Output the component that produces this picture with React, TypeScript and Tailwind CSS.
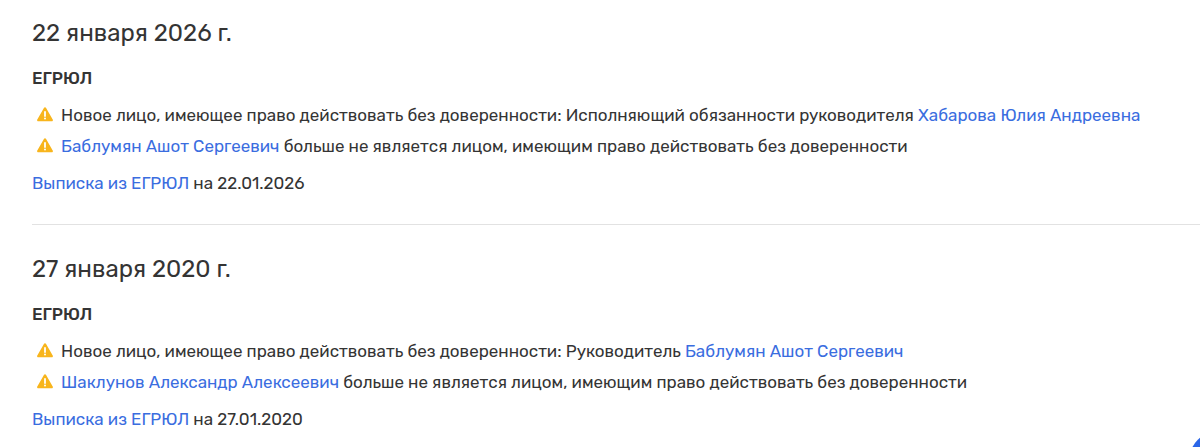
import type { ReactNode } from 'react';

interface Change {
    id: string;
    content: ReactNode;
}

interface HistoryEntry {
    date: string;
    extractDate: string;
    changes: Change[];
}

function TextLink({ children }: { children: ReactNode }) {
    return (
        <a href="#" className="text-[#3a6ddf] hover:underline">
            {children}
        </a>
    );
}

function WarningIcon() {
    return (
        <svg viewBox="0 0 16 16" className="size-4 shrink-0" aria-hidden="true">
            <path
                d="M6.9 0.9a1.3 1.3 0 0 1 2.2 0l6.6 11.5a1.2 1.2 0 0 1-1.1 1.9H1.4a1.2 1.2 0 0 1-1.1-1.9z"
                fill="#f8b51c"
            />
            <path d="M8 4.9v4.1" stroke="#fff" strokeWidth="1.8" strokeLinecap="round" />
            <circle cx="8" cy="11.6" r="1" fill="#fff" />
        </svg>
    );
}

const history: HistoryEntry[] = [
    {
        date: '22 января 2026 г.',
        extractDate: '22.01.2026',
        changes: [
            {
                id: 'new',
                content: (
                    <>
                        Новое лицо, имеющее право действовать без доверенности: Исполняющий обязанности руководителя{' '}
                        <TextLink>Хабарова Юлия Андреевна</TextLink>
                    </>
                )
            },
            {
                id: 'old',
                content: (
                    <>
                        <TextLink>Баблумян Ашот Сергеевич</TextLink> больше не является лицом, имеющим право
                        действовать без доверенности
                    </>
                )
            }
        ]
    },
    {
        date: '27 января 2020 г.',
        extractDate: '27.01.2020',
        changes: [
            {
                id: 'new',
                content: (
                    <>
                        Новое лицо, имеющее право действовать без доверенности: Руководитель{' '}
                        <TextLink>Баблумян Ашот Сергеевич</TextLink>
                    </>
                )
            },
            {
                id: 'old',
                content: (
                    <>
                        <TextLink>Шаклунов Александр Алексеевич</TextLink> больше не является лицом, имеющим право
                        действовать без доверенности
                    </>
                )
            }
        ]
    }
];

export default function App() {
    return (
        <main className="bg-white pl-8 pt-[17px] font-['Rubik','Roboto',sans-serif] text-[17px] leading-6 text-[#343434]">
            {history.map((entry) => (
                <section
                    key={entry.date}
                    className="border-b border-[#e2e2e2] pb-[29px] mb-7 last-of-type:border-0 last-of-type:pb-0 last-of-type:mb-0"
                >
                    <h2 className="text-2xl leading-8">{entry.date}</h2>
                    <h3 className="mt-[17px] font-medium">ЕГРЮЛ</h3>
                    <ul className="mt-[13px] flex flex-col gap-[7px]">
                        {entry.changes.map((change) => (
                            <li key={change.id} className="flex items-center gap-2 pl-[5px]">
                                <WarningIcon />
                                <span>{change.content}</span>
                            </li>
                        ))}
                    </ul>
                    <p className="mt-[13px]">
                        <TextLink>Выписка из ЕГРЮЛ</TextLink> на {entry.extractDate}
                    </p>
                </section>
            ))}
            <button type="button" aria-label="Чат" className="fixed right-0 bottom-0">
                <svg viewBox="0 0 12 16" className="block w-3 h-4" aria-hidden="true">
                    <circle cx="31" cy="30" r="30" fill="#2b66e8" />
                </svg>
            </button>
        </main>
    );
}
